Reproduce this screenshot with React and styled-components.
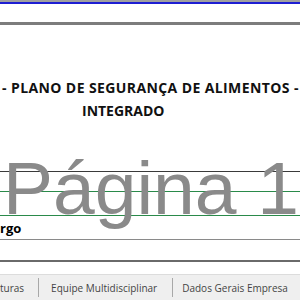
import React from "react";
import styled, { createGlobalStyle } from "styled-components";

const Global = createGlobalStyle`
  html, body { margin: 0; padding: 0; background: #ffffff; }
  body { width: 300px; height: 300px; overflow: hidden; font-family: "Open Sans", "Liberation Sans", sans-serif; }
`;

const Page = styled.div`
  position: relative;
  width: 300px;
  height: 300px;
  overflow: hidden;
  display: flex;
  flex-direction: column;
  background: #ffffff;
`;

const Band = styled.div`
  flex: none;
  height: ${(p) => p.$h}px;
  background: ${(p) => p.$c};
`;

const Spacer = styled.div`
  flex: none;
  height: ${(p) => p.$h}px;
`;

const Title = styled.div`
  flex: none;
  font-family: "Open Sans", "Liberation Sans", sans-serif;
  font-weight: 700;
  font-size: 14px;
  line-height: 23px;
  color: #111111;
  white-space: nowrap;
`;

const TitleLine = styled.div`
  padding-left: ${(p) => p.$indent}px;
  letter-spacing: ${(p) => p.$ls || 0}px;
`;

const Row = styled.div`
  flex: none;
  height: ${(p) => p.$h}px;
  border-bottom: ${(p) => p.$bw || 1}px solid ${(p) => p.$c};
  display: flex;
  align-items: flex-end;
`;

const CellText = styled.span`
  font-family: "Open Sans", "Liberation Sans", sans-serif;
  font-weight: 700;
  font-size: 13px;
  line-height: 18px;
  color: #000000;
  margin-bottom: 2px;
`;

const Watermark = styled.div`
  position: absolute;
  left: 3px;
  top: 145px;
  font-family: "Liberation Sans", Arial, sans-serif;
  font-size: 75px;
  line-height: 86px;
  color: #8a8a8a;
  white-space: nowrap;
  pointer-events: none;
`;

const TabBar = styled.div`
  flex: 1;
  background: #efefef;
  border-top: 1px solid #dcdcdc;
  display: flex;
  align-items: center;
  font-family: "Open Sans", "Liberation Sans", sans-serif;
  font-size: 10px;
  color: #444444;
  white-space: nowrap;
`;

const Tab = styled.div`
  height: 19px;
  display: flex;
  align-items: center;
  padding: 0 ${(p) => p.$pr}px 0 ${(p) => p.$pl}px;
  border-right: 1px solid #a8a8a8;
`;

export default function App() {
  return (
    <>
      <Global />
      <Page>
        <Band $h={2} $c="#a0a0a0" />
        <Band $h={2} $c="#1e1ed2" />
        <Spacer $h={18} />
        <Band $h={3} $c="#7c7c7c" />
        <Spacer $h={51} />
        <Title>
          <TitleLine $indent={2} $ls={0.4}>- PLANO DE SEGURANÇA DE ALIMENTOS -</TitleLine>
          <TitleLine $indent={82}>INTEGRADO</TitleLine>
        </Title>
        <Spacer $h={49} />
        <Band $h={1} $c="#3a3a3a" />
        <Row $h={19} $c="#2a8a4a" />
        <Row $h={23} $c="#2a8a4a" />
        <Row $h={23} $c="#8a8a8a">
          <CellText>rgo</CellText>
        </Row>
        <Row $h={20} $c="#6a6a6a" $bw={2} />
        <Spacer $h={12} />
        <TabBar>
          <Tab $pl={0} $pr={14}>turas</Tab>
          <Tab $pl={12} $pr={15}>Equipe Multidisciplinar</Tab>
          <Tab $pl={9} $pr={12}>Dados Gerais Empresa</Tab>
        </TabBar>
        <Watermark>Página 1</Watermark>
      </Page>
    </>
  );
}
